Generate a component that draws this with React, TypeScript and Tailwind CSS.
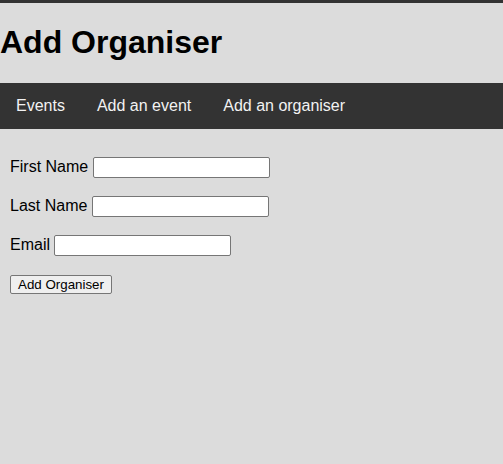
import React from "react";

export default function App() {
  const inputCls =
    "w-[177px] h-[21px] px-[2px] py-[1px] border border-[#767676] rounded-[2px] bg-white text-[13.333px] leading-[normal] font-['Liberation_Sans',Arial,sans-serif] align-baseline";
  return (
    <div className="min-h-screen bg-[#dcdcdc] border-t-[3px] border-[#333333] text-black font-['Liberation_Sans',Arial,sans-serif] text-base leading-[normal]">
      <h1 className="text-[32px] font-bold leading-[37px] mt-[21px] mb-[22px]">Add Organiser</h1>
      <nav className="flex bg-[#333333] h-[46px]">
        <a className="block px-4 py-[14px] leading-[18px] text-[#f2f2f2]">Events</a>
        <a className="block px-4 py-[14px] leading-[18px] text-[#f2f2f2]">Add an event</a>
        <a className="block px-4 py-[14px] leading-[18px] text-[#f2f2f2]">Add an organiser</a>
      </nav>
      <form className="p-[10px] leading-[23px]">
        <p className="my-4">
          <label>First Name</label> <input type="text" className={inputCls} />
        </p>
        <p className="my-4">
          <label>Last Name</label> <input type="text" className={inputCls} />
        </p>
        <p className="my-4">
          <label>Email</label> <input type="text" className={inputCls} />
        </p>
        <p className="my-4">
          <button
            type="button"
            className="px-[7px] py-[1px] border border-[#767676] rounded-[2px] bg-[#efefef] text-[13.333px] leading-[normal] text-black font-['Liberation_Sans',Arial,sans-serif]"
          >
            Add Organiser
          </button>
        </p>
      </form>
    </div>
  );
}
